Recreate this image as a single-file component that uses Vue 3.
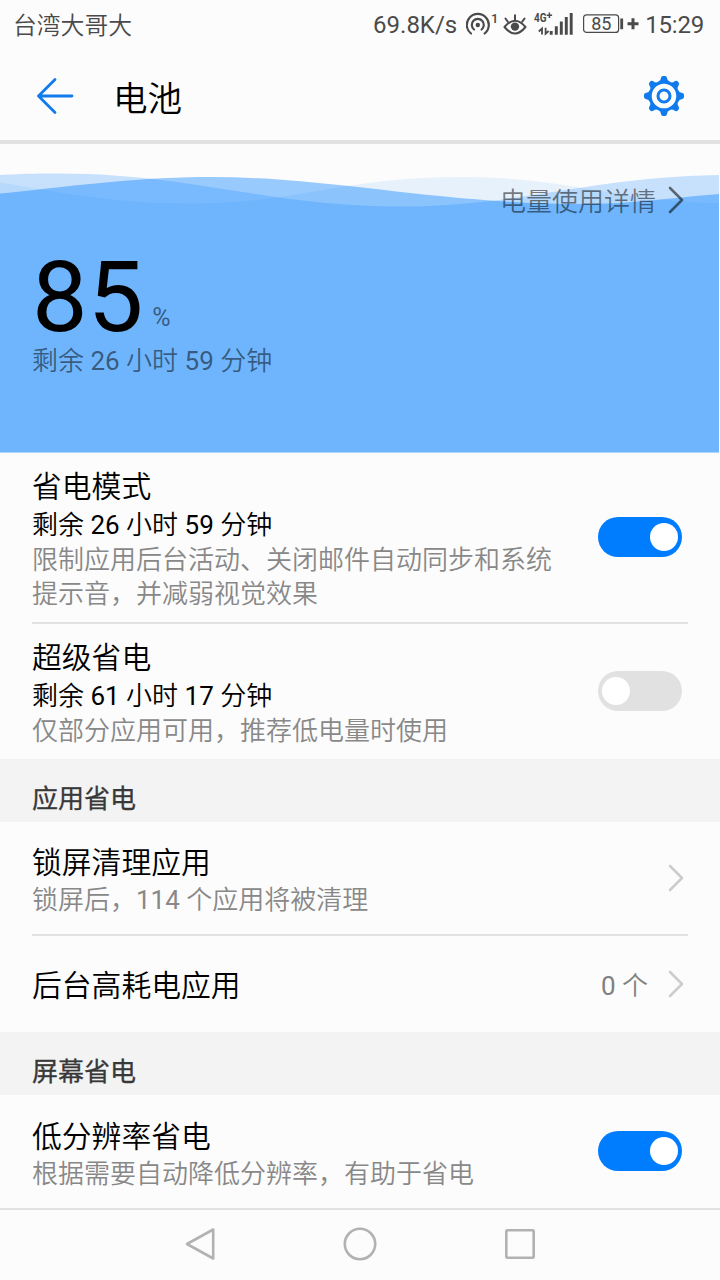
<script setup>
const chevron = 'M2 2 L14 14 L2 26'
</script>

<template>
  <div class="screen">
    <header class="status">
      <span class="carrier">台湾大哥大</span>
      <div class="indicators">
        <span class="speed">69.8K/s</span>
        <svg class="hotspot" width="32" height="28" viewBox="0 0 32 28">
          <g fill="none" stroke="#4a4a4a" stroke-width="2.2" stroke-linecap="round">
            <path d="M5 22.5 A11 11 0 1 1 18.6 22.5" />
            <path d="M8 18.5 A6 6 0 1 1 15.6 18.5" />
          </g>
          <circle cx="11.8" cy="14" r="2.2" fill="#4a4a4a" />
          <text x="25" y="11.5" font-size="13" font-weight="500">1</text>
        </svg>
        <svg class="eye" width="24" height="24" viewBox="0 0 24 24">
          <g fill="none" stroke="#4a4a4a" stroke-width="2" stroke-linecap="round" stroke-linejoin="round">
            <path d="M1.5 14 Q12 1.5 22.5 14 Q12 27 1.5 14Z" />
            <path d="M12 7 V2.3 M4.8 8.8 L2.5 5.5 M19.2 8.8 L21.5 5.5" />
          </g>
          <circle cx="12" cy="13.6" r="4.2" fill="#4a4a4a" />
        </svg>
        <svg class="signal" width="42" height="32" viewBox="0 -3 42 32">
          <text x="1" y="10.3" font-size="12.5" font-weight="700" textLength="12.5" lengthAdjust="spacingAndGlyphs">4G</text>
          <path d="M16.4 .5 V5.9 M13.7 3.2 H19.1" stroke="#4a4a4a" stroke-width="1.5" />
          <path d="M5.8 19.5 L9 16.5 V22.6 M12.6 15.8 V21.8 L15.6 19" fill="none" stroke="#4a4a4a" stroke-width="1.8" />
          <path d="M18.2 19 V22.8 M23.3 14.2 V22.8 M28.3 9.5 V22.8 M33.3 5 V22.8 M38.2 1 V22.8" stroke="#4a4a4a" stroke-width="2.9" />
        </svg>
        <svg class="battery" width="58" height="24" viewBox="0 0 58 24">
          <rect x="1.6" y="1.8" width="35" height="17.6" rx="3" fill="none" stroke="#4a4a4a" stroke-width="1.2" />
          <path d="M39.7 5.5 V16.2" stroke="#4a4a4a" stroke-width="2.8" />
          <path d="M45.5 10.8 H56.5 M51 5.3 V16.3" stroke="#4a4a4a" stroke-width="3" />
          <text x="19.3" y="17.2" font-size="18" font-weight="400" text-anchor="middle">85</text>
        </svg>
        <span class="clock">15:29</span>
      </div>
    </header>

    <div class="titlebar">
      <svg class="back" width="40" height="40" viewBox="0 0 40 40">
        <path d="M20 3.5 L3.5 20 L20 36.5 M3.5 20 H37" fill="none" stroke="#117bed" stroke-width="2.8" stroke-linecap="round" stroke-linejoin="round" />
      </svg>
      <h1>电池</h1>
      <svg class="gear" width="40" height="40" viewBox="-20 -20 40 40">
        <g fill="#117bed">
          <path v-for="n in 4" :key="n" :transform="`rotate(${(n - 1) * 90})`" d="M-6 -14 Q-3.2 -15 -2.9 -18.2 Q-2.8 -20 -1 -20 H1 Q2.8 -20 2.9 -18.2 Q3.2 -15 6 -14Z" />
          <path v-for="n in 4" :key="n + 4" :transform="`rotate(${n * 90 - 45})`" d="M-5.5 -14 Q-3.2 -15 -2.9 -17.5 Q-2.7 -20 0 -20 Q2.7 -20 2.9 -17.5 Q3.2 -15 5.5 -14Z" />
        </g>
        <circle r="13.8" fill="#fcfcfc" stroke="#117bed" stroke-width="3" />
        <circle r="6" fill="none" stroke="#117bed" stroke-width="3" />
      </svg>
    </div>

    <section class="hero">
      <svg class="waves" width="719" height="309" viewBox="0 0 719 309">
        <g fill="#007dff">
          <path fill-opacity=".087" d="M0 38.5 C60 48 110 59.5 190 59.5 C300 59.5 340 33 460 33 C570 33 620 58 719 59 V308.6 H0Z" />
          <path fill-opacity=".206" d="M0 31 C25 29.5 45 29.5 60 29.5 C190 29.5 270 62.5 400 62.5 C520 62.5 590 33 719 31 V308.6 H0Z" />
          <path fill-opacity=".397" d="M0 49.5 C60 44 130 33 212 33 C330 33 440 60 580 60 C630 60 660 55 719 50 V308.6 H0Z" />
        </g>
      </svg>
      <div class="details">
        <span>电量使用详情</span>
        <svg width="16" height="28" viewBox="0 0 16 28"><path :d="chevron" class="stroke dark" /></svg>
      </div>
      <div class="level"><b>85</b><span>%</span></div>
      <p class="remaining">剩余 26 小时 59 分钟</p>
    </section>

    <main>
      <div class="row mode">
        <div class="copy">
          <h2>省电模式</h2>
          <p class="strong">剩余 26 小时 59 分钟</p>
          <p>限制应用后台活动、关闭邮件自动同步和系统<br>提示音，并减弱视觉效果</p>
        </div>
        <i class="switch on"></i>
      </div>
      <div class="row ultra">
        <div class="copy">
          <h2>超级省电</h2>
          <p class="strong">剩余 61 小时 17 分钟</p>
          <p>仅部分应用可用，推荐低电量时使用</p>
        </div>
        <i class="switch"></i>
      </div>
      <h3>应用省电</h3>
      <div class="row lock">
        <div class="copy">
          <h2>锁屏清理应用</h2>
          <p>锁屏后，114 个应用将被清理</p>
        </div>
        <svg width="16" height="28" viewBox="0 0 16 28"><path :d="chevron" class="stroke" /></svg>
      </div>
      <div class="row drain">
        <h2>后台高耗电应用</h2>
        <span class="count">0 个</span>
        <svg width="16" height="28" viewBox="0 0 16 28"><path :d="chevron" class="stroke" /></svg>
      </div>
      <h3>屏幕省电</h3>
      <div class="row res">
        <div class="copy">
          <h2>低分辨率省电</h2>
          <p>根据需要自动降低分辨率，有助于省电</p>
        </div>
        <i class="switch on"></i>
      </div>
    </main>

    <nav>
      <svg width="36" height="36" viewBox="0 0 36 36"><path d="M31.2 3.5 V32.5 L5 18Z" /></svg>
      <svg width="36" height="36" viewBox="0 0 36 36"><circle cx="18" cy="18" r="15.2" /></svg>
      <svg width="36" height="36" viewBox="0 0 36 36"><rect x="4.3" y="4.3" width="27.4" height="27.4" rx="1" /></svg>
    </nav>
  </div>
</template>

<style>
html, body { background: #fcfcfc; }
</style>

<style scoped>
.screen {
  width: 720px; height: 1280px; overflow: hidden; background: #fcfcfc; color: #000;
  display: flex; flex-direction: column; box-sizing: border-box;
  font-family: Roboto, "Noto Sans CJK SC DemiLight", "Noto Sans CJK SC", sans-serif; font-weight: 400;
}
h1, h2, h3, p { margin: 0; font-weight: 400; }
svg { display: block; flex: none; }
text { fill: #4a4a4a; font-family: Roboto, sans-serif; }
.status { height: 50px; flex: none; display: flex; justify-content: space-between; padding: 0 16px 0 13px; color: #4a4a4a; line-height: 50px; }
.carrier { font-size: 23.8px; padding-top: 1px; }
.indicators { display: flex; align-items: center; }
.speed, .clock { font-size: 24px; }
.clock { letter-spacing: -.2px; }
.speed { margin-right: 9px; }
.eye { margin-left: 5px; }
.signal { margin: 0 7px 0 6px; }
.clock { margin-left: 5px; }
.titlebar { height: 90px; flex: none; box-sizing: content-box; border-bottom: 4px solid #e2e2e2; display: flex; align-items: center; padding: 0 36px 0 35px; }
h1 { font-size: 34.5px; line-height: 50px; margin: 8px auto 0 38px; }
.back, .gear { margin-top: 2px; }
.hero { height: 309px; flex: none; position: relative; display: flex; flex-direction: column; }
.waves { position: absolute; left: 0; top: 0; }
.details, .level, .remaining { position: relative; color: rgba(0, 0, 0, .5); }
.details { display: flex; justify-content: flex-end; align-items: center; gap: 12px; height: 40px; margin-top: 36px; padding-right: 36px; font-size: 26px; line-height: 40px; }
.details span { padding-top: 3px; }
.level { display: flex; align-items: flex-end; height: 90px; margin-top: 32px; padding-left: 32px; }
.level b { color: #000; font-size: 99px; line-height: 90px; font-weight: 400; letter-spacing: 0; }
.level span { font-size: 25px; line-height: 30px; margin: 0 0 9px 9px; }
.remaining { font-size: 26px; line-height: 36px; padding-left: 32px; margin-top: 1px; }
.stroke { fill: none; stroke: #ccc; stroke-width: 2.6; stroke-linecap: round; stroke-linejoin: round; }
.stroke.dark { stroke: rgba(0, 0, 0, .55); }
.row { display: flex; align-items: center; margin: 0 32px; padding-right: 4px; position: relative; box-sizing: border-box; }
.copy { flex: 1; padding-top: 3px; }
.mode, .lock { border-bottom: 2px solid #e2e2e2; }
.mode { height: 171px; }
.ultra { height: 135px; }
.lock { height: 114px; }
.drain { height: 96px; }
.drain h2 { padding-top: 4px; }
.res { height: 113px; }
.res .copy { padding-top: 4px; }
h2 { font-size: 29.8px; line-height: 40px; flex: 1; }
p { font-size: 26px; line-height: 34px; color: #888; white-space: nowrap; }
.strong { color: #000; line-height: 36px; }
.count { font-size: 26px; color: #808080; margin: 0 20px 2px 0; }
h3 { height: 63px; box-sizing: border-box; padding: 10px 32px 0; font-size: 26px; line-height: 60px; background: #f3f3f3; color: #383838; font-family: Roboto, "Noto Sans CJK SC", sans-serif; -webkit-text-stroke: .3px #383838; }
.switch { width: 84px; height: 40px; border-radius: 20px; background: #e1e1e1; display: flex; box-sizing: border-box; padding: 6px 4px; margin: 0 2px 1px 0; flex: none; }
.switch::before { content: ""; width: 28px; height: 28px; border-radius: 50%; background: #fff; }
.switch.on { background: #007dff; justify-content: flex-end; }
nav { flex: 1; border-top: 2px solid #e2e2e2; display: flex; justify-content: center; align-items: center; gap: 124px; padding-bottom: 2px; }
nav svg { fill: none; stroke: #b2b2b2; stroke-width: 2.6; stroke-linejoin: round; }
</style>
